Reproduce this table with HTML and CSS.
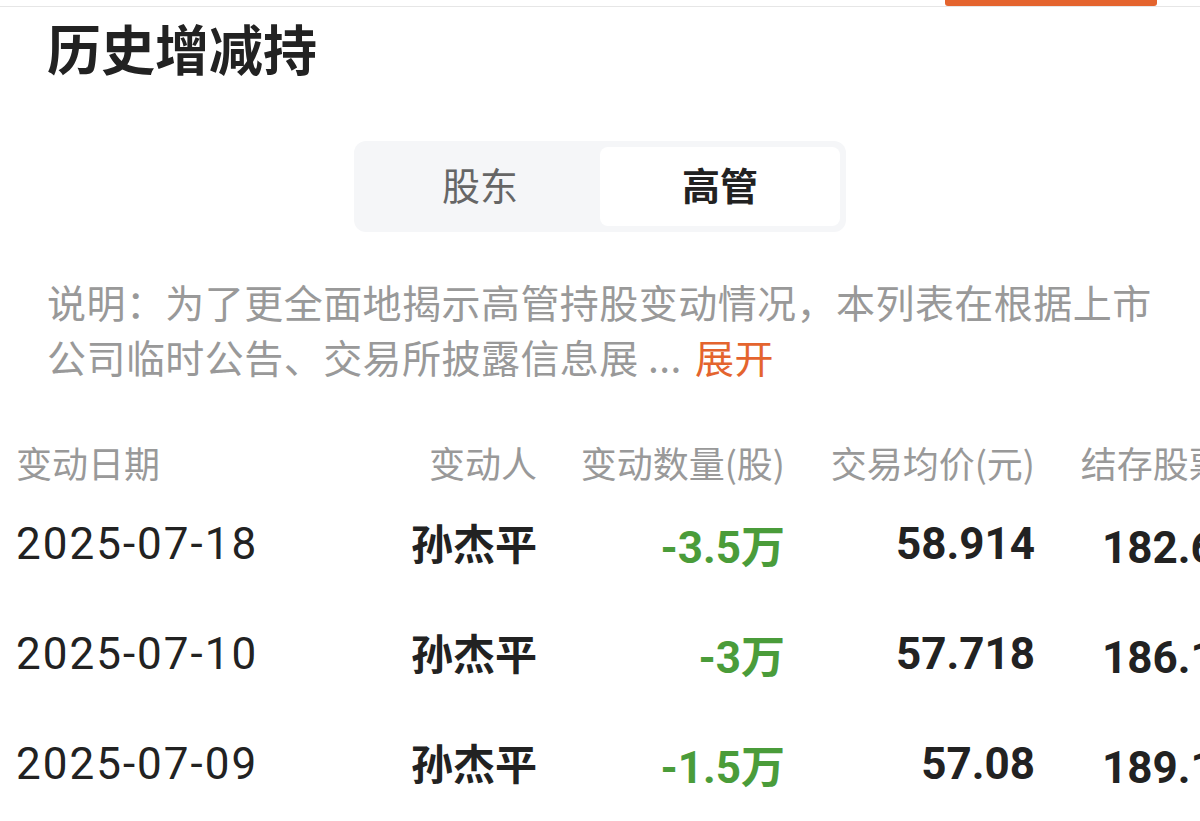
FILE: index.html
```html
<!DOCTYPE html>
<html lang="zh-CN">
  <head>
    <meta charset="UTF-8" />
    <title>历史增减持</title>
    <link rel="stylesheet" href="styles.css">
  </head>
  <body>
    <div class="topbar"><span class="indicator"></span></div>

    <h1>历史增减持</h1>

    <div class="seg">
      <div class="seg-item">股东</div>
      <div class="seg-item active">高管</div>
    </div>

    <p class="note">说明：为了更全面地揭示高管持股变动情况，本列表在根据上市公司临时公告、交易所披露信息展 ... <a class="more">展开</a></p>

    <div class="table">
      <div class="row head">
        <span class="c-date">变动日期</span>
        <span>变动人</span>
        <span>变动数量(股)</span>
        <span>交易均价(元)</span>
        <span>结存股票(股)</span>
      </div>
      <div class="row">
        <span class="c-date">2025-07-18</span>
        <span class="name">孙杰平</span>
        <span class="down">-3.5万</span>
        <span class="num">58.914</span>
        <span class="num">182.65万</span>
      </div>
      <div class="row">
        <span class="c-date">2025-07-10</span>
        <span class="name">孙杰平</span>
        <span class="down">-3万</span>
        <span class="num">57.718</span>
        <span class="num">186.15万</span>
      </div>
      <div class="row">
        <span class="c-date">2025-07-09</span>
        <span class="name">孙杰平</span>
        <span class="down">-1.5万</span>
        <span class="num">57.08</span>
        <span class="num">189.15万</span>
      </div>
    </div>
  </body>
</html>
```

FILE: styles.css
```css
:root {
  font-family: "Noto Sans CJK SC", sans-serif;
  --orange: #e4642e;
  --green: #4a9c3a;
  --text: #222;
  --muted: #999;
}
body {
  margin: 0;
  width: 1200px;
  height: 821px;
  overflow: hidden;
  background: #fff;
  color: var(--text);
}
.topbar {
  display: flex;
  justify-content: flex-end;
  padding-right: 43px;
  height: 6px;
  border-bottom: 1px solid #e6e6e6;
}
.indicator {
  width: 212px;
  height: 6px;
  background: var(--orange);
  border-radius: 0 0 3px 3px;
}
h1 {
  margin: 8px 0 0 47px;
  font-size: 54px;
  line-height: 65px;
  font-weight: 700;
}
.seg {
  display: grid;
  grid-template-columns: 1fr 1fr;
  width: 480px;
  margin: 61px auto 0;
  padding: 6px;
  background: #f5f6f8;
  border-radius: 12px;
}
.seg-item {
  height: 79px;
  line-height: 73px;
  text-align: center;
  font-size: 38px;
  color: #666;
}
.seg-item.active {
  background: #fff;
  border-radius: 8px;
  color: var(--text);
  font-weight: 700;
}
.note {
  margin: 42px 40px 0 47px;
  font-size: 39px;
  line-height: 55px;
  letter-spacing: 0.45px;
  color: var(--muted);
}
.more {
  margin-left: 4px;
  color: var(--orange);
}
.table {
  margin: 51px 0 0 16px;
  width: 1300px;
}
.row {
  display: grid;
  grid-template-columns: 271px 250px 248px 250px 250px;
  align-items: center;
  height: 110px;
  white-space: nowrap;
}
.row span {
  text-align: right;
}
.row .c-date {
  text-align: left;
}
.row.head {
  height: 54px;
  font-size: 36px;
  color: var(--muted);
}
.row:not(.head) {
  font-family: Roboto, "Noto Sans CJK SC", sans-serif;
  font-size: 44px;
}
.row:not(.head) .c-date {
  letter-spacing: 2px;
}
.name {
  padding-bottom: 6px;
  font-family: "Noto Sans CJK SC", sans-serif;
  font-size: 42px;
  font-weight: 700;
}
.down {
  color: var(--green);
  font-weight: 700;
}
.num {
  font-weight: 700;
}
```
